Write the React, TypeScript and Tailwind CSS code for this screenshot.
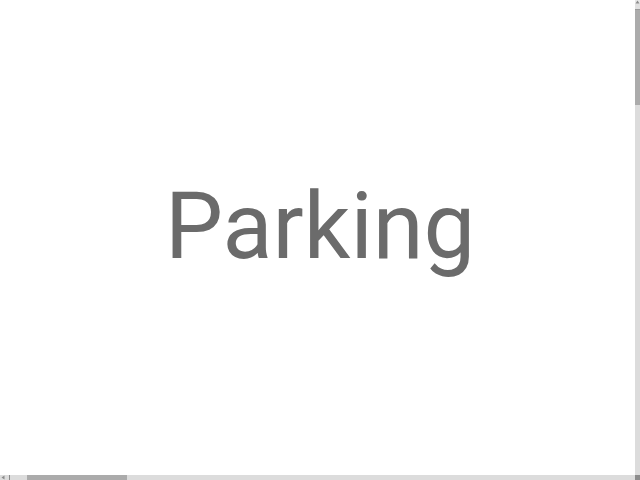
function VerticalBar() {
  return (
    <div className="flex w-[5px] flex-col bg-[#dcdcdc]">
      <div className="flex h-[4px] items-center justify-center bg-[#e6e6e6]">
        <svg width="5" height="4" viewBox="0 0 5 4">
          <path d="M2.5 0.5 L4.5 3.5 L0.5 3.5 Z" fill="#8a8a8a" />
        </svg>
      </div>
      <div className="h-[5px] bg-[#e0e0e0]" />
      <div className="h-[96px] border-t border-[#9a9a9a] bg-[#ababab]" />
      <div className="flex-1" />
    </div>
  );
}

function HorizontalBar() {
  return (
    <div className="flex h-[5px] bg-[#dcdcdc]">
      <div className="flex w-[5px] items-center justify-center">
        <svg width="4" height="5" viewBox="0 0 4 5">
          <path d="M0.5 2.5 L3.5 0.5 L3.5 4.5 Z" fill="#8a8a8a" />
        </svg>
      </div>
      <div className="w-[4px]" />
      <div className="w-px bg-[#8a8a8a]" />
      <div className="w-[17px]" />
      <div className="w-[100px] bg-[#ababab]" />
      <div className="flex-1" />
      <div className="w-[5px] bg-[#8c8c8c]" />
    </div>
  );
}

export default function App() {
  return (
    <div className="flex h-screen w-screen flex-col overflow-hidden bg-white">
      <div className="flex min-h-0 flex-1">
        <main className="min-w-0 flex-1 overflow-hidden">
          <div className="pt-[181px] pl-[165px]">
            <h1 className="whitespace-nowrap font-['Roboto',sans-serif] text-[92px] leading-none font-normal text-[#6b6b6b]">
              Parking
            </h1>
          </div>
        </main>
        <VerticalBar />
      </div>
      <HorizontalBar />
    </div>
  );
}
